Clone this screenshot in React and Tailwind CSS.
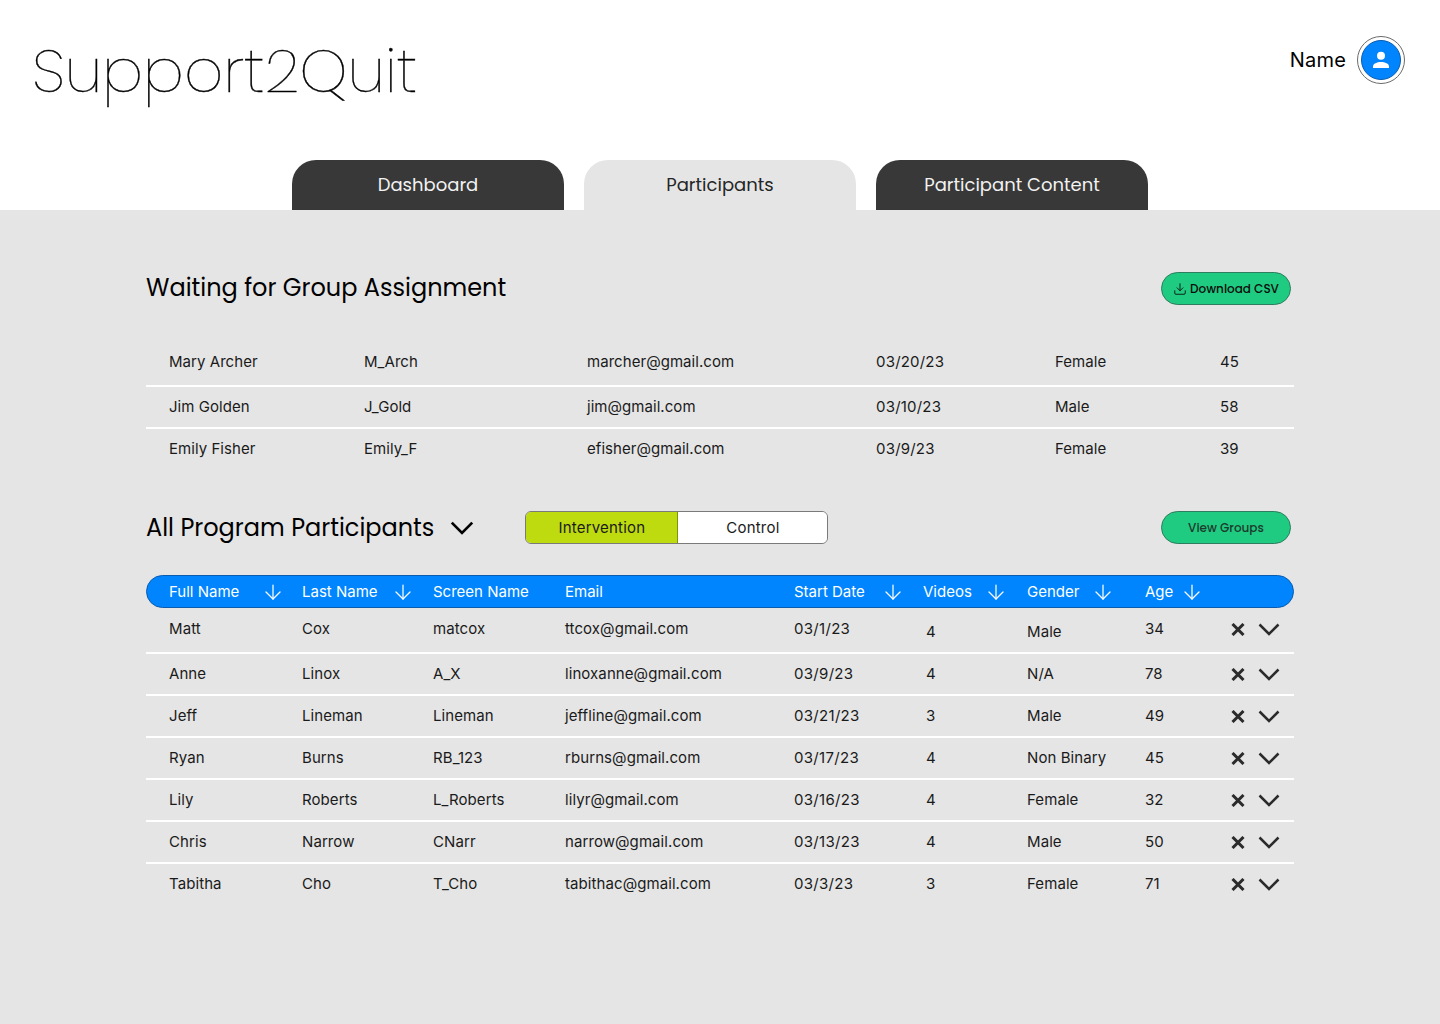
import React from 'react';
import { ArrowDown, Download } from 'lucide-react';

const display = "font-['Poppins','Lato','Inter',sans-serif]";

const waiting = [
  ['Mary Archer', 'M_Arch', 'marcher@gmail.com', '03/20/23', 'Female', '45'],
  ['Jim Golden', 'J_Gold', 'jim@gmail.com', '03/10/23', 'Male', '58'],
  ['Emily Fisher', 'Emily_F', 'efisher@gmail.com', '03/9/23', 'Female', '39'],
];

const participants = [
  ['Matt', 'Cox', 'matcox', 'ttcox@gmail.com', '03/1/23', '4', 'Male', '34'],
  ['Anne', 'Linox', 'A_X', 'linoxanne@gmail.com', '03/9/23', '4', 'N/A', '78'],
  ['Jeff', 'Lineman', 'Lineman', 'jeffline@gmail.com', '03/21/23', '3', 'Male', '49'],
  ['Ryan', 'Burns', 'RB_123', 'rburns@gmail.com', '03/17/23', '4', 'Non Binary', '45'],
  ['Lily', 'Roberts', 'L_Roberts', 'lilyr@gmail.com', '03/16/23', '4', 'Female', '32'],
  ['Chris', 'Narrow', 'CNarr', 'narrow@gmail.com', '03/13/23', '4', 'Male', '50'],
  ['Tabitha', 'Cho', 'T_Cho', 'tabithac@gmail.com', '03/3/23', '3', 'Female', '71'],
];

const tableCols = 'grid grid-cols-[133px_131px_132px_229px_129px_104px_118px_86px_1fr]';

const Chevron = ({ className }) => (
  <svg viewBox="0 0 22 13" fill="none" stroke="currentColor" strokeWidth="2.5" className={className}>
    <polyline points="1.5,1.5 11,11 20.5,1.5" />
  </svg>
);

const Cross = () => (
  <svg viewBox="0 0 14 13" fill="none" stroke="currentColor" strokeWidth="3" className="h-[13px] w-[14px] text-[#2b2b2b]">
    <path d="M1.5 1 12.5 12M12.5 1 1.5 12" />
  </svg>
);

const PersonIcon = () => (
  <svg viewBox="0 0 24 24" fill="white" className="h-[24px] w-[24px]">
    <circle cx="12" cy="7.7" r="4" />
    <path d="M4 20v-1.5C4 15.5 8 14 12 14s8 1.5 8 4.5V20z" />
  </svg>
);

const HeaderCell = ({ label, arrowLeft }) => (
  <div className="relative flex items-center">
    <span>{label}</span>
    {arrowLeft && (
      <ArrowDown
        className="absolute top-1/2 h-[24px] w-[24px] -translate-y-1/2 text-white"
        strokeWidth={1.25}
        style={{ left: arrowLeft }}
      />
    )}
  </div>
);

const Tab = ({ label, active }) => (
  <div
    className={`flex h-[50px] w-[272px] justify-center rounded-t-[24px] pt-[11px] text-[18px] leading-[27px] ${display} ${
      active ? 'bg-[#e5e5e5] text-[#262626]' : 'bg-[#383838] text-[#f2f2f2]'
    }`}
  >
    {label}
  </div>
);

export default function App() {
  return (
    <div className="flex min-h-[1024px] w-full flex-col bg-[#e5e5e5] font-['Inter',sans-serif] text-[#1a1a1a]">
      {/* Header */}
      <header className="relative h-[210px] bg-white">
        <div className="flex items-start justify-between pl-[32px] pr-[35px]">
          <h1 className={`mt-[31px] text-[61px] leading-[80px] font-extralight text-black [-webkit-text-stroke:0.4px_black] ${display}`}>Support2Quit</h1>
          <div className="mt-[36px] flex items-center gap-[11px]">
            <span className="text-[20px] leading-[24px] tracking-[0.2px] text-black">Name</span>
            <div className="flex h-[48px] w-[48px] items-center justify-center rounded-full border border-[#6b6b6b] bg-white">
              <div className="flex h-[40px] w-[40px] items-center justify-center rounded-full border border-[#0a5cb0] bg-[#0085ff]">
                <PersonIcon />
              </div>
            </div>
          </div>
        </div>
        <nav className="absolute bottom-0 left-[292px] flex gap-[20px]">
          <Tab label="Dashboard" />
          <Tab label="Participants" active />
          <Tab label="Participant Content" />
        </nav>
      </header>

      <main className="ml-[146px] w-[1148px]">
        {/* Waiting for group assignment */}
        <section className="mt-[62px] flex h-[33px] items-center justify-between pr-[3px]">
          <h2 className={`mb-[2px] text-[24px] leading-[32px] text-black ${display}`}>Waiting for Group Assignment</h2>
          <button className={`flex h-[33px] w-[130px] items-center justify-center gap-[3px] rounded-full border border-[#2e7d5e] bg-[#1fcb80] text-[12px] font-medium text-[#0c0c0c] ${display}`}>
            <Download className="h-[14px] w-[14px]" strokeWidth={1.5} />
            Download CSV
          </button>
        </section>

        <div className="mt-[33px] text-[15px] leading-[20px] tracking-[0.05px]">
          {waiting.map((row, i) => (
            <div
              key={row[0]}
              className={`grid grid-cols-[195px_223px_289px_179px_165px_1fr] border-white pl-[23px] ${
                i === 0 ? 'h-[49px] border-b-2 pt-[14px]' : i === 1 ? 'h-[42px] border-b-2 pt-[10px]' : 'h-[42px] pt-[10px]'
              }`}
            >
              {row.map((cell, j) => (
                <span key={j} className={j === 3 ? 'tracking-[0.2px]' : ''}>{cell}</span>
              ))}
            </div>
          ))}
        </div>

        {/* All participants */}
        <section className="mt-[40px] flex h-[33px] items-center pr-[3px]">
          <h2 className={`text-[24px] leading-[32px] text-black ${display}`}>All Program Participants</h2>
          <Chevron className="ml-[16px] h-[14px] w-[24px] text-black" />
          <div className="ml-[51px] flex h-[33px] w-[303px] overflow-hidden rounded-[6px] border border-[#7a7a7a] text-[15px] leading-[20px] tracking-[0.2px]">
            <div className="flex w-[152px] items-center justify-center border-r border-[#7f9408] bg-[#bedb10]">Intervention</div>
            <div className="flex flex-1 items-center justify-center bg-white">Control</div>
          </div>
          <button className={`ml-auto h-[33px] w-[130px] rounded-full border border-[#2e7d5e] bg-[#1fcb80] text-[12px] font-medium text-[#1d3a2d] ${display}`}>
            View Groups
          </button>
        </section>

        <div className={`${tableCols} mt-[31px] h-[33px] items-center rounded-full border border-[#0a5cb0] bg-[#0085ff] pl-[22px] text-[15px] leading-[20px] text-white`}>
          <HeaderCell label="Full Name" arrowLeft={92} />
          <HeaderCell label="Last Name" arrowLeft={89} />
          <HeaderCell label="Screen Name" />
          <HeaderCell label="Email" />
          <HeaderCell label="Start Date" arrowLeft={87} />
          <HeaderCell label="Videos" arrowLeft={61} />
          <HeaderCell label="Gender" arrowLeft={64} />
          <HeaderCell label="Age" arrowLeft={35} />
          <div />
        </div>

        <div className="text-[15px] leading-[20px] tracking-[0.08px]">
          {participants.map((row, i) => (
            <div
              key={row[0]}
              className={`${tableCols} border-white pl-[23px] ${i === 0 ? 'h-[46px] border-b-2 pt-[11px]' : i === 6 ? 'h-[42px] pt-[10px]' : 'h-[42px] border-b-2 pt-[10px]'}`}
            >
              {row.map((cell, j) => (
                <span
                  key={j}
                  className={j === 4 ? 'tracking-[0.3px]' : j === 5 ? `pl-[3px] ${i === 0 ? 'mt-[3px]' : ''}` : j === 6 && i === 0 ? 'mt-[3px]' : ''}
                >
                  {cell}
                </span>
              ))}
              <div className="flex h-[20px] items-center gap-[13px]">
                <Cross />
                <Chevron className="h-[13px] w-[22px] text-[#2b2b2b]" />
              </div>
            </div>
          ))}
        </div>
      </main>
    </div>
  );
}
